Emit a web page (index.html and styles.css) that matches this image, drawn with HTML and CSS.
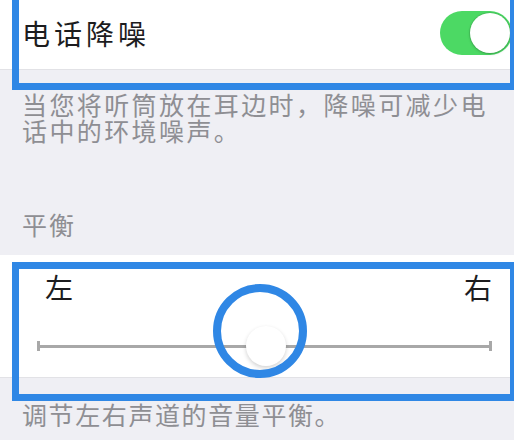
FILE: index.html
```html
<!DOCTYPE html>
<html lang="zh-CN">
<head>
<meta charset="UTF-8">
<meta name="viewport" content="width=device-width, initial-scale=1.0">
<title>电话降噪</title>
<link rel="stylesheet" href="styles.css">
</head>
<body>
<div class="group">
  <div class="cell toggle-cell">
    <span class="title">电话降噪</span>
    <span class="switch"><span class="switch-knob"></span></span>
  </div>
  <div class="mark mark-noise"></div>
</div>
<p class="footer">当您将听筒放在耳边时，降噪可减少电话中的环境噪声。</p>

<p class="header">平衡</p>
<div class="group">
  <div class="cell slider-cell">
    <div class="labels">
      <span>左</span>
      <span>右</span>
    </div>
    <div class="track">
      <span class="tick"></span>
      <span class="line"></span>
      <span class="tick"></span>
      <span class="knob"></span>
    </div>
  </div>
  <div class="mark mark-balance"></div>
  <div class="ring"></div>
</div>
<p class="footer footer-last">调节左右声道的音量平衡。</p>
</body>
</html>
```
FILE: styles.css
```css
body {
  margin: 0;
  background: #efeff4;
  font-family: "Noto Sans CJK SC", "Noto Sans", sans-serif;
  overflow: hidden;
}
p { margin: 0; }

.group { position: relative; }

.cell {
  background: #fff;
  border-bottom: 1px solid #e2e2e6;
}

.toggle-cell {
  height: 70px;
  display: flex;
  align-items: center;
  justify-content: space-between;
  padding: 0 2px 4px 22px;
  box-sizing: border-box;
}
.title {
  font-size: 28px;
  line-height: 32px;
  letter-spacing: 4px;
  color: #1c1c1e;
}
.switch {
  width: 72px;
  height: 44px;
  border-radius: 22px;
  background: #4cd964;
  position: relative;
}
.switch-knob {
  position: absolute;
  right: 2px;
  top: 2px;
  width: 40px;
  height: 40px;
  border-radius: 50%;
  background: #fff;
  box-shadow: 0 0 0 1px rgba(0, 0, 0, 0.08), 0 1px 3px rgba(0, 0, 0, 0.2);
}

.footer {
  padding: 21px 16px 0 22px;
  font-size: 25px;
  line-height: 26px;
  letter-spacing: 2.4px;
  color: #8e8e93;
}
.header {
  padding: 68px 22px 18px;
  font-size: 25px;
  line-height: 26px;
  letter-spacing: 2px;
  color: #8e8e93;
}
.footer-last { padding-top: 23px; letter-spacing: 1.6px; }

.slider-cell {
  height: 123px;
  box-sizing: border-box;
  padding: 16px 22px 0 37px;
}
.labels {
  display: flex;
  justify-content: space-between;
  padding: 0 0 0 8px;
  font-size: 28px;
  line-height: 32px;
  color: #1c1c1e;
}
.track {
  position: relative;
  display: flex;
  align-items: center;
  height: 10px;
  margin-top: 38px;
}
.tick {
  width: 3px;
  height: 10px;
  background: #a8a8a8;
}
.line {
  flex: 1;
  height: 3px;
  background: #a8a8a8;
}
.knob {
  position: absolute;
  left: 209px;
  top: -15px;
  width: 40px;
  height: 40px;
  border-radius: 50%;
  background: #fff;
  box-shadow: 0 2px 4px rgba(0, 0, 0, 0.18);
}

.mark {
  position: absolute;
  border: 7px solid #2f87e5;
  left: 12px;
  right: -3px;
}
.mark-noise {
  top: -20px;
  height: 96px;
}
.mark-balance {
  top: 7px;
  height: 125px;
}
.ring {
  position: absolute;
  left: 213px;
  top: 29px;
  width: 78px;
  height: 78px;
  border: 8px solid #2f87e5;
  border-radius: 50%;
}
```
